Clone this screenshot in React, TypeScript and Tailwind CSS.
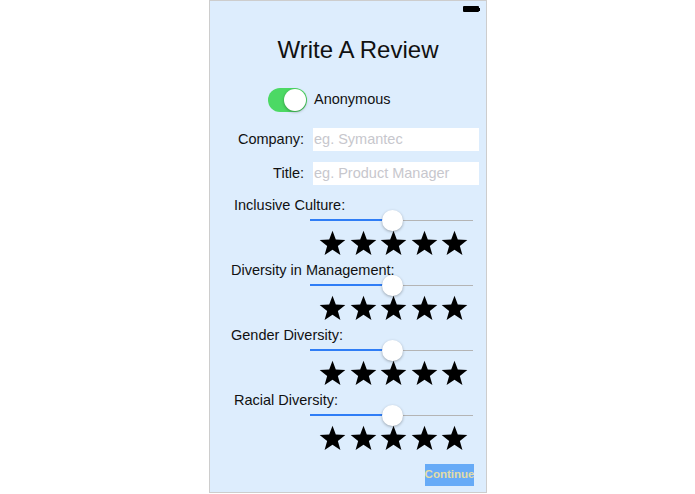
import React from "react"

const sections = [
  { label: "Inclusive Culture:", offset: "ml-[24px]" },
  { label: "Diversity in Management:", offset: "ml-[21px]" },
  { label: "Gender Diversity:", offset: "ml-[21px]" },
  { label: "Racial Diversity:", offset: "ml-[24px]" },
]

function Star() {
  return (
    <svg width="27" height="27" viewBox="0 0 24 24" className="shrink-0">
      <polygon
        fill="#000"
        points="12,0.6 14.94,8.55 23.41,8.89 16.76,14.15 19.05,22.31 12,17.6 4.95,22.31 7.24,14.15 0.59,8.89 9.06,8.55"
      />
    </svg>
  )
}

function Slider() {
  return (
    <div className="relative ml-[100px] w-[163px] h-[12px] flex items-center">
      <div className="w-[82px] h-[2px] bg-[#2f7df6]" />
      <div className="flex-1 h-[1px] bg-[#b4b4b4]" />
      <div className="absolute left-[72px] top-[-4px] w-[21px] h-[21px] rounded-full bg-white shadow-[0_1px_3px_rgba(0,0,0,0.3)]" />
    </div>
  )
}

function Field({ label, placeholder, top }: { label: string; placeholder: string; top: string }) {
  return (
    <div className={`flex items-center h-[23px] ${top}`}>
      <div className="w-[94px] text-right text-[14.5px] text-[#111]">{label}</div>
      <div className="ml-[9px] w-[166px] h-[23px] bg-white flex items-center pl-[1px] text-[14.5px] text-[#c7c7cd]">
        {placeholder}
      </div>
    </div>
  )
}

export default function App() {
  return (
    <div className="w-[695px] h-[494px] bg-white" style={{ fontFamily: '"Liberation Sans", Arial, sans-serif' }}>
      <div className="ml-[209px] w-[278px] h-[493px] border border-[#cdcdcd] bg-[#ddedfd] flex flex-col">
        {/* status bar */}
        <div className="h-[15px] flex justify-end items-start pt-[5px] pr-[6px]">
          <div className="flex items-center">
            <div className="w-[16px] h-[6px] bg-black rounded-[1px]" />
            <div className="w-[1px] h-[3px] bg-black" />
          </div>
        </div>

        <div className="mt-[20px] h-[28px] leading-[28px] text-[24px] text-[#111] text-center pl-[20px]">
          Write A Review
        </div>

        <div className="mt-[24px] h-[24px] flex items-center">
          <div className="ml-[58px] w-[39px] h-[24px] rounded-full bg-[#4cd964] flex items-center justify-end pr-[1px]">
            <div className="w-[22px] h-[22px] rounded-full bg-white shadow-[0_1px_3px_rgba(0,0,0,0.35)]" />
          </div>
          <div className="ml-[7px] text-[14.5px] text-[#111]">Anonymous</div>
        </div>

        <Field label="Company:" placeholder="eg. Symantec" top="mt-[16px]" />
        <Field label="Title:" placeholder="eg. Product Manager" top="mt-[11px]" />

        <div className="mt-[11px] flex flex-col">
          {sections.map((s, i) => (
            <div key={s.label} className={`flex flex-col ${i > 0 ? "mt-[6px]" : ""}`}>
              <div className={`h-[18px] leading-[18px] text-[14.5px] text-[#111] ${s.offset}`}>{s.label}</div>
              <Slider />
              <div className="mt-[5px] h-[24px] ml-[109px] flex items-center gap-[3.5px]">
                {[0, 1, 2, 3, 4].map((n) => (
                  <Star key={n} />
                ))}
              </div>
            </div>
          ))}
        </div>

        <div className="mt-[14px] flex justify-end pr-[12px]">
          <button className="w-[49px] h-[22px] bg-[#67abf7] text-[#e2dca6] font-bold text-[11.5px] flex items-center justify-center overflow-hidden whitespace-nowrap">
            Continue
          </button>
        </div>
      </div>
    </div>
  )
}
